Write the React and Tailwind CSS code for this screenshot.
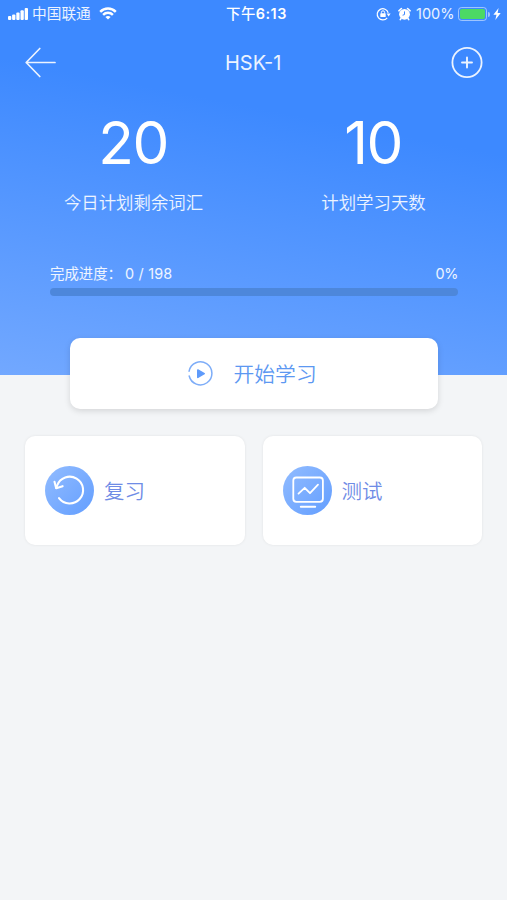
import { useState } from "react";

function StatusBar() {
  return (
    <div className="relative flex h-7 items-center justify-between pl-2 pr-[6px] text-[14px] text-white/90">
      <div className="flex items-center">
        <svg width="20" height="12" viewBox="0 0 20 12" fill="white">
          <rect x="0" y="8" width="3.3" height="4" rx="1" />
          <rect x="4.1" y="6.5" width="3.3" height="5.5" rx="1" />
          <rect x="8.3" y="4.5" width="3.3" height="7.5" rx="1" />
          <rect x="12.5" y="2.3" width="3.3" height="9.7" rx="1" />
          <rect x="16.7" y="0" width="3.3" height="12" rx="1" />
        </svg>
        <span className="ml-1 pt-px text-[14.7px]">中国联通</span>
        <svg className="ml-2" width="18" height="13" viewBox="0 0 18 13">
          <g fill="none" stroke="white" strokeWidth="2.5">
            <path d="M1.2 4.8C5.6 0.5 12.4 0.5 16.8 4.8" />
            <path d="M4.1 7.8C6.9 5.1 11.1 5.1 13.9 7.8" />
          </g>
          <path d="M9 12.6L6.4 9.9C7.9 8.6 10.1 8.6 11.6 9.9Z" fill="white" />
        </svg>
      </div>

      <span className="absolute left-[226px] top-0 leading-7 font-medium text-[14.4px] tracking-[0.5px] text-white">
        下午<span className="font-semibold">6:13</span>
      </span>

      <div className="flex items-center">
        <svg width="15" height="14" viewBox="0 0 15 14" fill="none">
          <path
            d="M11.2 10.8A5.6 5.6 0 1 1 12.2 5.8"
            stroke="white"
            strokeWidth="1.2"
          />
          <path d="M10.6 6.6H14.6L12.6 9.4Z" fill="white" />
          <rect x="4.3" y="6.3" width="5.4" height="3.8" rx="0.6" fill="white" />
          <path
            d="M5.4 6.5V5.4A1.6 1.6 0 0 1 8.6 5.4V6.5"
            stroke="white"
            strokeWidth="1"
          />
        </svg>
        <svg className="ml-[7px] mb-px" width="13" height="14" viewBox="0 0 13 14">
          <circle cx="6.5" cy="7.3" r="5.4" fill="white" />
          <path
            d="M0.9 3.8L3.4 1.5M12.1 3.8L9.6 1.5M3 11.5L2.3 12.6M10 11.5L10.7 12.6"
            stroke="white"
            strokeWidth="1.6"
            strokeLinecap="round"
          />
          <path
            d="M6.5 4.4V7.6L4.6 8.2"
            fill="none"
            stroke="#3d89ff"
            strokeWidth="1"
          />
        </svg>
        <span className="ml-[5px] w-[40px] text-[14.5px]">100%</span>
        <div className="ml-[2px] h-[14px] w-[29px] rounded-[3.5px] border border-white/50 p-px">
          <div className="h-full w-full rounded-[2px] bg-[#4cd964]" />
        </div>
        <div className="ml-px h-[5px] w-[2px] rounded-r-full bg-white/50" />
        <svg className="ml-[3px]" width="8" height="12" viewBox="0 0 8 12">
          <path d="M5.6 0L0.4 6.7H3.5L2.3 12L7.7 4.9H4.6Z" fill="white" />
        </svg>
      </div>
    </div>
  );
}

function NavBar({ title }) {
  return (
    <div className="relative flex h-[67px] items-center justify-between pl-[25px] pr-6">
      <svg
        width="32"
        height="32"
        viewBox="0 0 32 32"
        fill="none"
        stroke="white"
        strokeOpacity="0.9"
        strokeWidth="1.7"
        strokeLinecap="round"
        strokeLinejoin="round"
      >
        <path d="M14.8 2.5L1.2 16.5L14.8 30.5M1.2 16.5H30" />
      </svg>
      <span className="absolute left-[225px] top-[21px] text-[20px] leading-7 text-white/90">
        {title}
      </span>
      <svg
        width="32"
        height="32"
        viewBox="0 0 32 32"
        fill="none"
        stroke="white"
        strokeOpacity="0.9"
        strokeLinecap="round"
      >
        <circle cx="16" cy="16.5" r="14.6" strokeWidth="1.8" />
        <path d="M11 16.5H21M16 11.5V21.5" strokeWidth="1.9" />
      </svg>
    </div>
  );
}

function Stat({ value, label }) {
  return (
    <div className="flex flex-col items-center text-white">
      <span className="h-[91px] pr-px text-[58.5px] leading-[90px] font-[370] tracking-[-1.5px]">
        {value}
      </span>
      <span className="h-7 text-[17.4px] leading-7 font-[350] text-white/90">
        {label}
      </span>
    </div>
  );
}

function ReviewIcon() {
  return (
    <svg width="49" height="49" viewBox="0 0 49 49" fill="none">
      <defs>
        <linearGradient id="review" x1="0" y1="0" x2="1" y2="1">
          <stop offset="0" stopColor="#92bcff" />
          <stop offset="1" stopColor="#639eff" />
        </linearGradient>
      </defs>
      <circle cx="24.5" cy="24.5" r="24.5" fill="url(#review)" />
      <g
        stroke="white"
        strokeWidth="2.1"
        strokeLinecap="round"
        strokeLinejoin="round"
      >
        <path d="M14 32.2A13.4 13.4 0 1 0 12.1 19.5L11.3 22" />
        <path d="M9.5 15.8L11.2 22.2L17.6 20.2" />
      </g>
    </svg>
  );
}

function TestIcon() {
  return (
    <svg width="49" height="49" viewBox="0 0 49 49" fill="none">
      <defs>
        <linearGradient id="test" x1="0" y1="0" x2="1" y2="1">
          <stop offset="0" stopColor="#92bcff" />
          <stop offset="1" stopColor="#639eff" />
        </linearGradient>
      </defs>
      <circle cx="24.5" cy="24.5" r="24.5" fill="url(#test)" />
      <g
        stroke="white"
        strokeWidth="1.8"
        strokeLinecap="round"
        strokeLinejoin="round"
      >
        <rect x="10.3" y="11.5" width="29.6" height="24.3" rx="3" />
        <path d="M15.5 27.6L21.7 21.8L27 27.2L35 18.7" />
        <path d="M17.8 40.8H32.2" strokeWidth="2" />
      </g>
    </svg>
  );
}

function ActionCard({ icon, label }) {
  return (
    <button className="flex h-[109px] flex-1 items-center rounded-[10px] bg-white pl-5 shadow-[0_0_3px_rgba(0,0,0,0.08)]">
      {icon}
      <span className="ml-[10px] pt-[4px] text-[20.5px] font-[350] text-[#6f8ce6]">
        {label}
      </span>
    </button>
  );
}

export default function App() {
  const [plan] = useState({ left: 20, days: 10, done: 0, total: 198 });
  const percent = Math.round((plan.done / plan.total) * 100);

  return (
    <div className="h-[900px] w-full overflow-hidden bg-[#f3f5f7] font-['Inter','Noto_Sans_CJK_SC',sans-serif]">
      <header className="h-[375px] bg-[linear-gradient(191deg,#3d89ff_0%,#3d89ff_33%,#72a8ff_100%)]">
        <StatusBar />
        <NavBar title="HSK-1" />

        <div className="grid grid-cols-[240px_240px] justify-center pt-[3px]">
          <Stat value={plan.left} label="今日计划剩余词汇" />
          <Stat value={plan.days} label="计划学习天数" />
        </div>

        <div className="ml-[50px] mr-[49px] mt-[46px]">
          <div className="flex h-[22px] items-center justify-between text-[14.4px] text-white/90">
            <span>
              完成进度：
              <span className="ml-[3px] tracking-[0.2px]">
                {plan.done} / {plan.total}
              </span>
            </span>
            <span className="tracking-[-0.4px]">{percent}%</span>
          </div>
          <div className="mt-[3px] h-2 overflow-hidden rounded-full bg-[#4d87db]">
            <div className="h-full bg-white" style={{ width: `${percent}%` }} />
          </div>
        </div>
      </header>

      <main className="relative -mt-[37px]">
        <button className="mx-auto flex h-[71px] w-[368px] items-center rounded-[10px] bg-white pl-[118px] shadow-[0_2px_6px_rgba(0,0,0,0.13)]">
          <svg width="25" height="25" viewBox="0 0 25 25" fill="none">
            <path
              d="M1.1 10.2A11.5 11.5 0 1 1 1.2 15"
              stroke="#7eadf8"
              strokeWidth="1.5"
              strokeLinecap="round"
            />
            <path
              d="M9.8 9L16.2 12.6L9.8 16.4Z"
              fill="#5f9bfb"
              stroke="#5f9bfb"
              strokeWidth="1.6"
              strokeLinejoin="round"
            />
          </svg>
          <span className="ml-[21px] pt-[2px] text-[20.8px] font-[350] text-[#5c98f2]">
            开始学习
          </span>
        </button>

        <div className="mt-[27px] flex gap-[18px] px-[25px]">
          <ActionCard icon={<ReviewIcon />} label="复习" />
          <ActionCard icon={<TestIcon />} label="测试" />
        </div>
      </main>
    </div>
  );
}
